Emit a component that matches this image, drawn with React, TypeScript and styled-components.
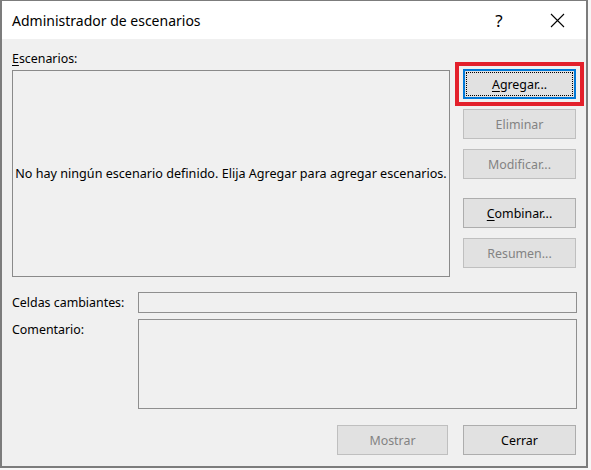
import React from 'react';
import styled, { createGlobalStyle } from 'styled-components';

const GlobalStyle = createGlobalStyle`
  html, body {
    margin: 0;
    padding: 0;
    background: #f7f7f7;
  }
  body {
    font-family: 'Noto Sans', 'Open Sans', sans-serif;
    font-size: 12.4px;
    color: #000;
  }
`;

const Window = styled.div`
  box-sizing: border-box;
  width: 588px;
  height: 468px;
  display: flex;
  flex-direction: column;
  background: #f0f0f0;
  border: 2px solid #7c7c7c;
  border-top-width: 1px;
`;

const TitleBar = styled.div`
  height: 38px;
  display: flex;
  align-items: center;
  background: #fff;
  padding-left: 10px;
`;

const Title = styled.div`
  flex: 1;
  font-size: 14px;
`;

const TitleButton = styled.div`
  width: 58px;
  height: 38px;
  display: flex;
  align-items: center;
  justify-content: center;
  font-size: 17px;
`;

const Body = styled.div`
  flex: 1;
  display: flex;
  flex-direction: column;
  padding: 10px 10px 10px 10px;
`;

const Label = styled.div`
  height: 20px;
  line-height: 20px;
  white-space: nowrap;
`;

const Underlined = styled.span`
  text-decoration: underline;
  text-underline-offset: 2px;
`;

const MainGrid = styled.div`
  display: grid;
  grid-template-columns: 438px 113px;
  column-gap: 13px;
`;

const ListBox = styled.div`
  box-sizing: border-box;
  height: 207px;
  margin-top: 1px;
  border: 1px solid #8a8a8a;
  display: flex;
  align-items: center;
  justify-content: center;
  white-space: nowrap;
  font-size: 12.6px;
`;

const ButtonColumn = styled.div`
  display: flex;
  flex-direction: column;
  gap: 10px;
`;

const Button = styled.div<{ $disabled?: boolean; $focused?: boolean; $gapAbove?: boolean }>`
  position: relative;
  box-sizing: border-box;
  width: 113px;
  height: 30px;
  display: flex;
  align-items: center;
  justify-content: center;
  background: #e1e1e1;
  border: ${(p) => (p.$focused ? '2px solid #0078d7' : p.$disabled ? '1px solid #bfbfbf' : '1px solid #adadad')};
  color: ${(p) => (p.$disabled ? '#838383' : '#000')};
  margin-top: ${(p) => (p.$gapAbove ? '9px' : '0')};
`;

const FocusRing = styled.div`
  position: absolute;
  inset: 1px;
  border: 1px dotted #000;
`;

const Highlight = styled.div`
  position: absolute;
  left: -10px;
  top: -9px;
  right: -10px;
  bottom: -9px;
  border: 4px solid #e3202b;
  pointer-events: none;
`;

const ButtonText = styled.span`
  position: relative;
`;

const FieldRow = styled.div<{ $height: number }>`
  display: grid;
  grid-template-columns: 126px 439px;
  height: ${(p) => p.$height}px;
`;

const Field = styled.div`
  box-sizing: border-box;
  border: 1px solid #8f8f8f;
  height: 100%;
`;

const FieldLabel = styled.div<{ $center?: boolean }>`
  display: flex;
  align-items: ${(p) => (p.$center ? 'center' : 'flex-start')};
  padding-top: ${(p) => (p.$center ? '0' : '2px')};
  white-space: nowrap;
`;

const Fields = styled.div`
  display: flex;
  flex-direction: column;
  gap: 6px;
  margin-top: 15px;
`;

const Footer = styled.div`
  display: flex;
  justify-content: flex-end;
  gap: 15px;
  margin-top: 16px;
`;

const FooterButton = styled(Button)<{ $w: number }>`
  width: ${(p) => p.$w}px;
`;

const CloseIcon = () => (
  <svg width="15" height="15" viewBox="0 0 15 15">
    <path d="M1 1 L14 14 M14 1 L1 14" stroke="#000" strokeWidth="1.1" fill="none" />
  </svg>
);

const sideButtons: { label: React.ReactNode; disabled?: boolean; gapAbove?: boolean }[] = [
  { label: 'Eliminar', disabled: true },
  { label: 'Modificar...', disabled: true },
  {
    label: (
      <>
        <Underlined>C</Underlined>ombinar...
      </>
    ),
    gapAbove: true,
  },
  { label: 'Resumen...', disabled: true },
];

const App = (): JSX.Element => {
  return (
    <>
      <GlobalStyle />
      <Window>
        <TitleBar>
          <Title>Administrador de escenarios</Title>
          <TitleButton>?</TitleButton>
          <TitleButton>
            <CloseIcon />
          </TitleButton>
        </TitleBar>
        <Body>
          <Label>
            <Underlined>E</Underlined>scenarios:
          </Label>
          <MainGrid>
            <ListBox>No hay ningún escenario definido. Elija Agregar para agregar escenarios.</ListBox>
            <ButtonColumn>
              <Button $focused>
                <FocusRing />
                <Highlight />
                <ButtonText>
                  <Underlined>A</Underlined>gregar...
                </ButtonText>
              </Button>
              {sideButtons.map((b, i) => (
                <Button key={i} $disabled={b.disabled} $gapAbove={b.gapAbove}>
                  {b.label}
                </Button>
              ))}
            </ButtonColumn>
          </MainGrid>
          <Fields>
            <FieldRow $height={21}>
              <FieldLabel $center>Celdas cambiantes:</FieldLabel>
              <Field />
            </FieldRow>
            <FieldRow $height={90}>
              <FieldLabel>Comentario:</FieldLabel>
              <Field />
            </FieldRow>
          </Fields>
          <Footer>
            <FooterButton $w={111} $disabled>
              Mostrar
            </FooterButton>
            <FooterButton $w={113}>Cerrar</FooterButton>
          </Footer>
        </Body>
      </Window>
    </>
  );
};

export default App;
